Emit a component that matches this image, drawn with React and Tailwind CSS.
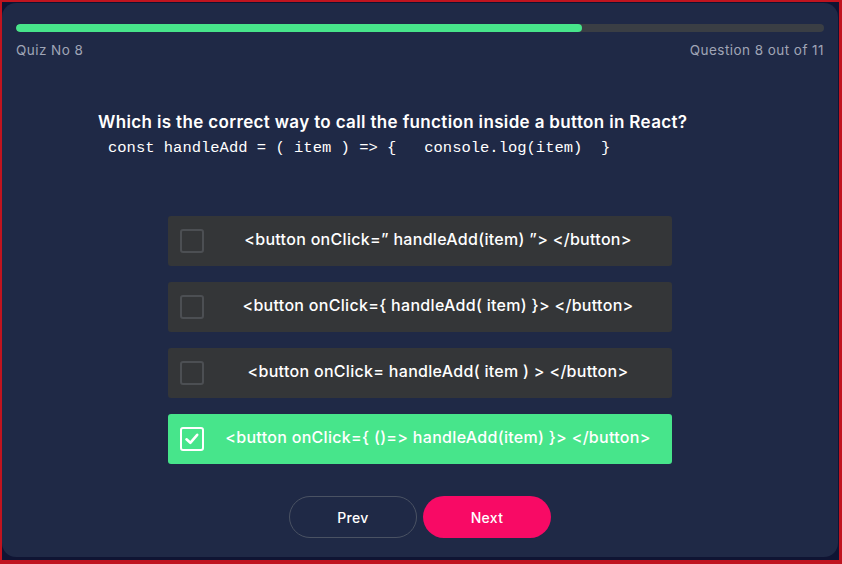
import { useState } from 'react';

const OPTIONS = [
    '<button onClick=” handleAdd(item) ”> </button>',
    '<button onClick={ handleAdd( item) }> </button>',
    '<button onClick= handleAdd( item ) > </button>',
    '<button onClick={ ()=> handleAdd(item) }> </button>',
];

const TOTAL = 11;
const CURRENT = 8;

export default function App() {
    const [selected, setSelected] = useState(3);

    return (
        <div className="w-[842px] h-[564px] bg-[#0f1433] border-t-2 border-l-2 border-r-[3px] border-b-[4px] border-[#c0141f] flex" style={{ fontFamily: 'Inter, "Noto Sans", sans-serif' }}>
            <div className="flex-1 mt-[1px] mb-[3px] mr-[1px] rounded-[14px] bg-[#1f2946] px-[14px] pt-[21px] flex flex-col">
                {/* progress */}
                <div className="h-2 w-full rounded-full bg-[#3a3e44] overflow-hidden">
                    <div className="h-full rounded-full bg-[#47e58b]" style={{ width: '70%' }}></div>
                </div>
                <div className="flex justify-between mt-[8px] text-[13.5px] text-[#a0a5b6] tracking-[0.45px]">
                    <span>Quiz No {CURRENT}</span>
                    <span>Question {CURRENT} out of {TOTAL}</span>
                </div>

                <div className="mt-[50px] pl-[82px]">
                    <h2 className="text-[17px] font-semibold text-white leading-6 tracking-[0.35px]">
                        Which is the correct way to call the function inside a button in React?
                    </h2>
                    <pre className="mt-[4px] ml-[10px] text-[15.5px] leading-5 text-white" style={{ fontFamily: '"Liberation Mono", monospace' }}>
                        {'const handleAdd = ( item ) => {   console.log(item)  }'}
                    </pre>
                </div>

                <div className="mt-[58px] mx-auto w-[504px] flex flex-col gap-4">
                    {OPTIONS.map((opt, i) => (
                        <OptionRow
                            key={i}
                            text={opt}
                            checked={selected === i}
                            onClick={() => setSelected(i)}
                        />
                    ))}
                </div>

                <div className="mt-8 flex justify-center gap-[6px]">
                    <button className="w-[128px] h-[42px] rounded-full border border-[#4a5263] text-white text-[14px] font-medium tracking-[0.3px]">
                        Prev
                    </button>
                    <button className="w-[128px] h-[42px] rounded-full bg-[#f80a65] text-white text-[14px] font-medium tracking-[0.3px]">
                        Next
                    </button>
                </div>
            </div>
        </div>
    );
}

const OptionRow = ({ text, checked, onClick }) => (
    <div
        onClick={onClick}
        className={`h-[50px] rounded-[3px] flex items-center pl-3 cursor-pointer ${checked ? 'bg-[#47e58b]' : 'bg-[#343638]'}`}
    >
        <div className={`w-6 h-6 rounded-[3px] border-2 flex items-center justify-center ${checked ? 'border-white' : 'border-[#4c4f53]'}`}>
            {checked && (
                <svg width="16" height="16" viewBox="0 0 16 16" fill="none">
                    <path d="M2.5 8.3 L6.3 11.8 L13.2 3.8" stroke="white" strokeWidth="2.6" strokeLinecap="round" strokeLinejoin="round" />
                </svg>
            )}
        </div>
        <div className="flex-1 pb-1 text-center text-white text-[16px] font-medium tracking-[0.3px]">
            {text}
        </div>
    </div>
);
